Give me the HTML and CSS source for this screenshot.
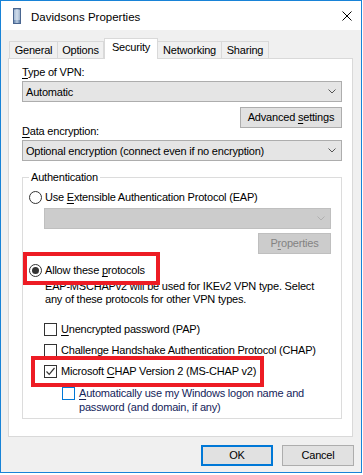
FILE: index.html
```html
<!DOCTYPE html>
<html lang="en">
<head>
    <meta charset="UTF-8">
    <meta name="viewport" content="width=device-width, initial-scale=1.0">
    <title>Davidsons Properties</title>
    <link rel="stylesheet" href="styles.css">
</head>
<body>
    <div class="window">
        <div class="titlebar">
            <svg class="app-icon" width="8" height="16" viewBox="0 0 8 16">
                <defs>
                    <linearGradient id="srv" x1="0" y1="0" x2="1" y2="0">
                        <stop offset="0" stop-color="#5b7da8"/>
                        <stop offset="0.5" stop-color="#b9cbe0"/>
                        <stop offset="1" stop-color="#4f6f99"/>
                    </linearGradient>
                </defs>
                <rect x="0.5" y="0.5" width="7" height="15" fill="url(#srv)" stroke="#4a6690"/>
                <path d="M1 3h6M1 5h6M1 7h6M1 9h6M1 11h6" stroke="#e8f0f8" stroke-width="1"/>
            </svg>
            <span class="title">Davidsons Properties</span>
            <svg class="close" width="10" height="10" viewBox="0 0 10 10">
                <path d="M0.5 0.5L9.5 9.5M9.5 0.5L0.5 9.5" stroke="#000" stroke-width="1"/>
            </svg>
        </div>

        <div class="dialog">
            <div class="tabs">
                <div class="tab tab-general">General</div>
                <div class="tab tab-options">Options</div>
                <div class="tab tab-security active">Security</div>
                <div class="tab tab-networking">Networking</div>
                <div class="tab tab-sharing">Sharing</div>
            </div>

            <div class="panel">
                <div class="label"><u>T</u>ype of VPN:</div>
                <div class="combo">
                    <span>Automatic</span>
                    <svg class="chevron" width="8" height="5" viewBox="0 0 8 5"><path d="M0.5 0.5L4 4L7.5 0.5" fill="none" stroke="#555" stroke-width="1"/></svg>
                </div>
                <div class="button-row">
                    <div class="btn btn-advanced">Advanced <u>s</u>ettings</div>
                </div>
                <div class="label label-data"><u>D</u>ata encryption:</div>
                <div class="combo">
                    <span>Optional encryption (connect even if no encryption)</span>
                    <svg class="chevron" width="8" height="5" viewBox="0 0 8 5"><path d="M0.5 0.5L4 4L7.5 0.5" fill="none" stroke="#555" stroke-width="1"/></svg>
                </div>

                <fieldset class="group">
                    <legend>Authentication</legend>
                    <div class="radio-row row-eap">
                        <span class="radio"></span>
                        <span>Use <u>E</u>xtensible Authentication Protocol (EAP)</span>
                    </div>
                    <div class="combo combo-disabled">
                        <span></span>
                        <svg class="chevron" width="8" height="5" viewBox="0 0 8 5"><path d="M0.5 0.5L4 4L7.5 0.5" fill="none" stroke="#b0b0b0" stroke-width="1"/></svg>
                    </div>
                    <div class="button-row button-row-inner">
                        <div class="btn btn-disabled">P<u>r</u>operties</div>
                    </div>
                    <div class="radio-row row-allow">
                        <span class="radio checked"></span>
                        <span>Allow these <u>p</u>rotocols</span>
                    </div>
                    <p class="note">EAP-MSCHAPv2 will be used for IKEv2 VPN type. Select any of these protocols for other VPN types.</p>
                    <div class="check-row row-pap">
                        <span class="check"></span>
                        <span><u>U</u>nencrypted password (PAP)</span>
                    </div>
                    <div class="check-row">
                        <span class="check"></span>
                        <span>C<u>h</u>allenge Handshake Authentication Protocol (CHAP)</span>
                    </div>
                    <div class="check-row">
                        <span class="check">
                            <svg width="11" height="11" viewBox="0 0 11 11"><path d="M1.5 5.5L4.2 8.3L9.5 2" fill="none" stroke="#333" stroke-width="1.2"/></svg>
                        </span>
                        <span>Microsoft <u>C</u>HAP Version 2 (MS-CHAP v2)</span>
                    </div>
                    <div class="check-row sub-row">
                        <span class="check check-focus"></span>
                        <span class="sub-text"><u>A</u>utomatically use my Windows logon name and password (and domain, if any)</span>
                    </div>
                </fieldset>

                <div class="highlight highlight-allow"></div>
                <div class="highlight highlight-mschap"></div>
            </div>

            <div class="footer">
                <div class="btn btn-footer btn-default">OK</div>
                <div class="btn btn-footer">Cancel</div>
            </div>
        </div>
    </div>
</body>
</html>
```

FILE: styles.css
```css
body {
    margin: 0;
    background: #fff;
    font-family: "Liberation Sans", Arial, sans-serif;
    font-size: 11px;
    letter-spacing: -0.2px;
    color: #000;
}
u {
    text-decoration-thickness: 1px;
    text-underline-offset: 2px;
}
.window {
    width: 362px;
    height: 473px;
    box-sizing: border-box;
    border: 1px solid #1883d7;
    background: #f0f0f0;
    display: flex;
    flex-direction: column;
}
.titlebar {
    height: 29px;
    background: #fff;
    display: flex;
    align-items: center;
}
.app-icon {
    margin-left: 12px;
    margin-top: 1px;
}
.title {
    margin-left: 10px;
    font-size: 11.5px;
    letter-spacing: 0;
    margin-top: 2px;
}
.close {
    margin-left: auto;
    margin-right: 9px;
}
.dialog {
    flex: 1;
    padding: 8px 7px 0 7px;
}

/* tabs */
.tabs {
    display: flex;
    align-items: flex-end;
    height: 20px;
    padding-left: 1px;
}
.tab {
    box-sizing: border-box;
    height: 17px;
    border: 1px solid #d9d9d9;
    border-bottom: none;
    background: #f0f0f0;
    text-align: center;
    line-height: 16px;
    margin-left: -1px;
}
.tab-general { width: 49px; margin-left: 0; }
.tab-options { width: 47px; }
.tab-security { width: 54px; }
.tab-networking { width: 65px; }
.tab-sharing { width: 48px; }
.tab.active {
    height: 21px;
    margin-bottom: -1px;
    background: #fff;
    position: relative;
    z-index: 1;
    line-height: 17px;
    margin-left: 0;
}

.panel {
    position: relative;
    height: 379px;
    box-sizing: border-box;
    border: 1px solid #d9d9d9;
    background: #fff;
    margin-right: 1px;
    padding: 0 10px 0 13px;
}
.label {
    line-height: 15px;
    margin-top: 6px;
}
.label-data {
    margin-top: -4px;
}
.combo {
    box-sizing: border-box;
    height: 21px;
    border: 1px solid #adadad;
    background: #e5e5e5;
    display: flex;
    align-items: center;
    justify-content: space-between;
    padding-left: 3px;
    margin-top: 1px;
}
.chevron {
    margin-right: 5px;
}
.button-row {
    display: flex;
    justify-content: flex-end;
    margin-top: 5px;
}
.btn {
    box-sizing: border-box;
    height: 21px;
    border: 1px solid #adadad;
    background: #e1e1e1;
    text-align: center;
    line-height: 19px;
}
.btn-advanced {
    width: 102px;
}

/* authentication group */
.group {
    margin: 9px 0 0 0;
    padding: 0 0 4px 0;
    border: 1px solid #dcdcdc;
    min-width: 0;
}
.group legend {
    line-height: 15px;
    padding: 0 2px;
    margin-left: 6px;
}
.radio-row,
.check-row {
    display: flex;
    align-items: center;
    line-height: 15px;
}
.radio-row {
    margin-left: 6px;
}
.row-eap {
    margin-top: 5px;
}
.row-allow {
    margin-top: 9px;
}
.radio {
    box-sizing: border-box;
    width: 13px;
    height: 13px;
    border: 1px solid #333;
    border-radius: 50%;
    background: #fff;
    margin-right: 3px;
    display: flex;
    align-items: center;
    justify-content: center;
}
.radio.checked::after {
    content: "";
    width: 7px;
    height: 7px;
    border-radius: 50%;
    background: #333;
}
.combo-disabled {
    margin: 3px 10px 0 21px;
    background: #cccccc;
    border-color: #bfbfbf;
}
.button-row-inner {
    margin: 4px 10px 0 0;
}
.btn-disabled {
    width: 73px;
    background: #cccccc;
    border-color: #bfbfbf;
    color: #838383;
}
.note {
    margin: 2px 10px 0 22px;
    line-height: 13px;
}
.check-row {
    margin-left: 21px;
    margin-top: 6px;
}
.row-pap {
    margin-top: 16px;
}
.check {
    box-sizing: border-box;
    width: 13px;
    height: 13px;
    border: 1px solid #333;
    background: #fff;
    margin-right: 4px;
    flex-shrink: 0;
    display: flex;
    align-items: center;
    justify-content: center;
}
.check-focus {
    border-color: #0078d7;
}
.sub-row {
    margin-left: 39px;
    margin-top: 7px;
    align-items: flex-start;
}
.sub-row .check {
    margin-top: 1px;
    margin-right: 4px;
}
.sub-text {
    width: 232px;
    line-height: 14px;
    color: #14245a;
}

/* red annotation boxes */
.highlight {
    position: absolute;
    border: 4px solid #ed1c24;
    box-sizing: border-box;
}
.highlight-allow {
    left: 14px;
    top: 193px;
    width: 137px;
    height: 33px;
}
.highlight-mschap {
    left: 22px;
    top: 297px;
    width: 233px;
    height: 31px;
}

.footer {
    display: flex;
    justify-content: flex-end;
    gap: 9px;
    margin-top: 8px;
}
.btn-footer {
    width: 72px;
}
.btn-default {
    border: 2px solid #0078d7;
    line-height: 17px;
}
```
